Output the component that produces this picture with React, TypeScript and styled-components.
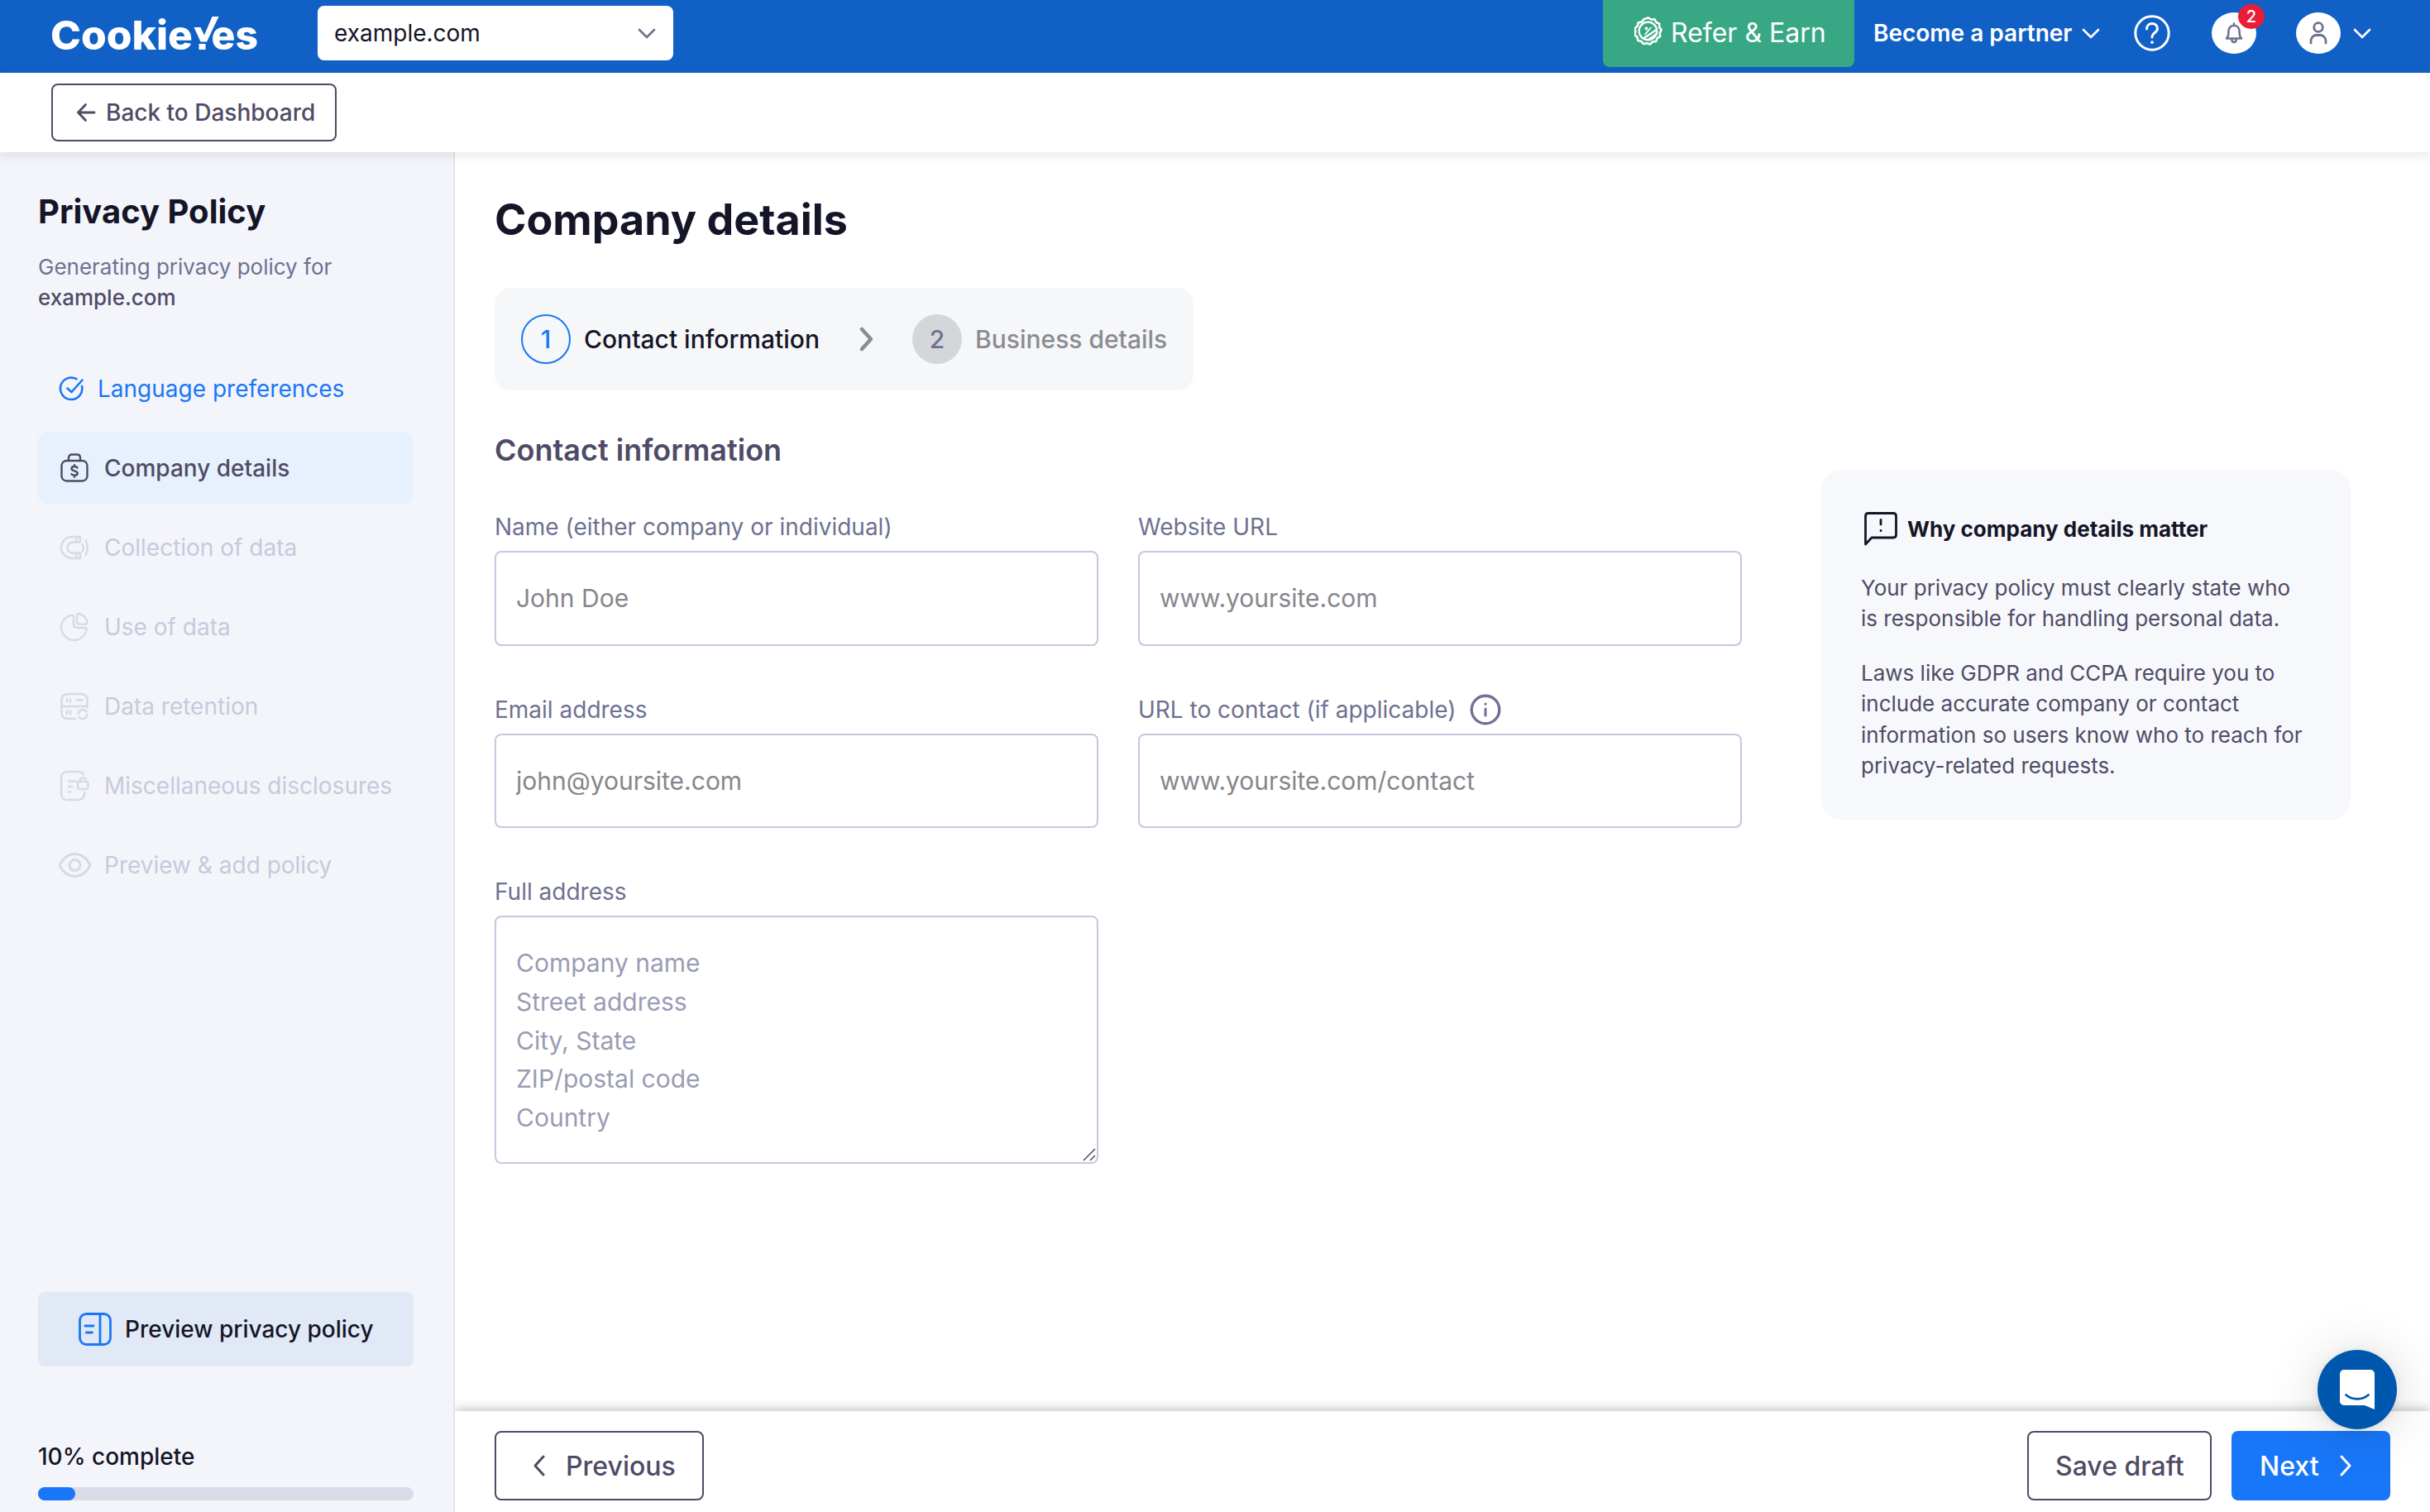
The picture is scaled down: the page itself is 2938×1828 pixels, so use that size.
import React from 'react';
import styled, { createGlobalStyle } from 'styled-components';

const font = `Inter, "Liberation Sans", sans-serif`;
const ink = '#151528';
const slate = '#4f4b66';
const muted = '#6e7191';
const faint = '#c8c9dc';
const blue = '#1877f8';

const Global = createGlobalStyle`
  * { box-sizing: border-box; }
  body { margin: 0; background: #fff; font-family: ${font}; color: ${ink}; }
  button, input, textarea { font-family: inherit; }
  svg { display: block; flex: none; }
  h1, h2, h3, p { margin: 0; }
`;

const Page = styled.div`
  width: 2938px;
  height: 1828px;
  display: flex;
  flex-direction: column;
  overflow: hidden;
  position: relative;
`;

/* ---------- header ---------- */
const Header = styled.header`
  height: 88px;
  flex: none;
  display: flex;
  align-items: flex-start;
  background: #1160c6;
  color: #fff;
  padding: 0 71px 0 60px;
`;

const HeaderGroup = styled.div<{ $ml?: string; $gap?: number }>`
  height: 80px;
  display: flex;
  align-items: center;
  gap: ${(p) => p.$gap ?? 0}px;
  margin-left: ${(p) => p.$ml ?? '0'};
`;

const SiteSelect = styled.div`
  width: 430px;
  height: 66px;
  margin-left: 70px;
  padding: 0 21px 0 20px;
  border-radius: 8px;
  background: #fff;
  color: ${ink};
  display: flex;
  align-items: center;
  justify-content: space-between;
  font-size: 28px;
`;

const ReferButton = styled.div`
  width: 304px;
  height: 82px;
  border-radius: 0 0 8px 8px;
  background: #38a884;
  display: flex;
  align-items: center;
  padding: 0 0 1px 38px;
  gap: 10px;
  font-size: 32px;
  white-space: nowrap;
  svg {
    margin-bottom: 4px;
  }
`;

const PartnerLink = styled.div`
  margin-left: 23px;
  width: 252px;
  font-size: 28px;
  font-weight: 600;
  white-space: nowrap;
`;

const RoundButton = styled.div<{ $ml: number }>`
  position: relative;
  width: 54px;
  height: 50px;
  margin-left: ${(p) => p.$ml}px;
  border-radius: 50%;
  background: #fff;
  display: flex;
  align-items: center;
  justify-content: center;
`;

const Badge = styled.span`
  position: absolute;
  left: 32px;
  top: -10px;
  width: 32px;
  height: 30px;
  border-radius: 50%;
  background: #ea1d36;
  color: #fff;
  font-size: 20px;
  font-weight: 500;
  line-height: 30px;
  text-align: center;
`;

const SubHeader = styled.div`
  height: 96px;
  flex: none;
  background: #fff;
  padding: 13px 0 0 62px;
  box-shadow: 0 4px 14px rgba(20, 20, 43, 0.1);
  position: relative;
  z-index: 2;
`;

const BackButton = styled.button`
  width: 345px;
  height: 70px;
  border: 2px solid ${slate};
  border-radius: 8px;
  background: #fff;
  color: ${slate};
  display: flex;
  align-items: center;
  padding: 0 0 0 28px;
  gap: 12px;
  font-size: 28px;
  font-weight: 500;
  white-space: nowrap;
`;

/* ---------- sidebar ---------- */
const Body = styled.div`
  flex: 1;
  display: flex;
  min-height: 0;
`;

const Sidebar = styled.aside`
  width: 550px;
  flex: none;
  background: #f4f5fb;
  border-right: 2px solid #e4e4e8;
  padding: 48px 48px 14px 46px;
  display: flex;
  flex-direction: column;
`;

const SideTitle = styled.h2`
  font-size: 40px;
  line-height: 48px;
  font-weight: 700;
`;

const SideText = styled.p`
  margin-top: 24px;
  font-size: 26px;
  line-height: 37.400px;
  color: ${muted};
  white-space: nowrap;
`;

const Domain = styled.span`
  display: block;
  color: ${slate};
  font-weight: 500;
`;

const Nav = styled.nav`
  margin-top: 47.200px;
  display: flex;
  flex-direction: column;
  gap: 8px;
`;

type NavState = 'done' | 'active' | 'todo';

const NavItem = styled.div<{ $state: NavState }>`
  height: 88px;
  border-radius: 12px;
  display: flex;
  align-items: center;
  gap: 15px;
  padding-left: 25px;
  font-size: 28px;
  font-weight: ${(p) => (p.$state === 'active' ? 500 : 400)};
  white-space: nowrap;
  background: ${(p) => (p.$state === 'active' ? '#e7f1fe' : 'transparent')};
  color: ${(p) => (p.$state === 'done' ? blue : p.$state === 'active' ? slate : faint)};
  svg {
    color: ${(p) => (p.$state === 'todo' ? '#d8d9e3' : 'inherit')};
  }
`;

const PreviewButton = styled.button`
  margin-top: auto;
  height: 90px;
  flex: none;
  border: 0;
  border-radius: 8px;
  background: #e1e9f6;
  color: ${ink};
  display: flex;
  align-items: center;
  padding: 0 0 0 47px;
  gap: 14px;
  font-size: 28px;
  font-weight: 500;
  white-space: nowrap;
  svg {
    color: ${blue};
  }
`;

const ProgressLabel = styled.div`
  margin-top: 89px;
  font-size: 28px;
  line-height: 40px;
  font-weight: 500;
`;

const Track = styled.div`
  margin-top: 17px;
  height: 16px;
  flex: none;
  border-radius: 8px;
  background: #d9dbe9;
`;

const Fill = styled.div`
  height: 16px;
  border-radius: 8px;
  background: ${blue};
`;

/* ---------- main ---------- */
const Main = styled.main`
  flex: 1;
  display: flex;
  flex-direction: column;
  min-width: 0;
`;

const Content = styled.div`
  flex: 1;
  padding: 50px 96px 0 48px;
`;

const Title = styled.h1`
  font-size: 52px;
  line-height: 64px;
  font-weight: 700;
`;

const Stepper = styled.div`
  margin-top: 50px;
  width: 845px;
  height: 124px;
  border-radius: 20px;
  background: #f6f7f9;
  display: flex;
  align-items: center;
  padding-left: 32px;
`;

const StepNumber = styled.div<{ $active?: boolean }>`
  width: 60px;
  height: 60px;
  border-radius: 50%;
  border: ${(p) => (p.$active ? `2px solid ${blue}` : '0')};
  background: ${(p) => (p.$active ? 'transparent' : '#d5d6da')};
  color: ${(p) => (p.$active ? blue : muted)};
  display: flex;
  align-items: center;
  justify-content: center;
  font-size: 30px;
  font-weight: 500;
`;

const StepLabel = styled.div<{ $active?: boolean }>`
  margin-left: 16px;
  font-size: 30px;
  font-weight: 500;
  white-space: nowrap;
  color: ${(p) => (p.$active ? ink : '#8a8b94')};
`;

const StepArrow = styled.div`
  flex: 1;
  display: flex;
  justify-content: center;
`;

const StepFirst = styled.div`
  width: 362px;
  display: flex;
  align-items: center;
`;

const StepSecond = styled.div`
  width: 340px;
  display: flex;
  align-items: center;
`;

const Columns = styled.div`
  margin-top: 50px;
  display: grid;
  grid-template-columns: 1508px 640px;
  column-gap: 96px;
  align-items: start;
`;

const SectionTitle = styled.h2`
  font-size: 36px;
  line-height: 44px;
  font-weight: 600;
  color: ${slate};
`;

const FormGrid = styled.div`
  margin-top: 52px;
  display: grid;
  grid-template-columns: 730px 730px;
  column-gap: 48px;
  row-gap: 58px;
`;

const Field = styled.label`
  display: flex;
  flex-direction: column;
  gap: 10px;
`;

const FieldLabel = styled.span`
  height: 38px;
  display: flex;
  align-items: center;
  gap: 17px;
  font-size: 28px;
  color: ${muted};
  white-space: nowrap;
`;

const TextInput = styled.input`
  height: 114.500px;
  border: 2px solid #c6c8dc;
  border-radius: 8px;
  padding: 0 24px;
  font-size: 30px;
  color: ${ink};
  background: #fff;
  outline: none;
  &::placeholder {
    color: #86868c;
    opacity: 1;
  }
`;

const AreaWrap = styled.span`
  position: relative;
  display: flex;
`;

const TextArea = styled.textarea`
  width: 730px;
  height: 300px;
  resize: none;
  overflow: hidden;
  border: 2px solid #c6c8dc;
  border-radius: 8px;
  padding: 32px 24px 28px;
  font-size: 30px;
  line-height: 46.8px;
  background: #fff;
  outline: none;
  &::placeholder {
    color: #9a9cb4;
    opacity: 1;
  }
`;

const Grip = styled.svg`
  position: absolute;
  right: 3px;
  bottom: 3px;
`;

const Tip = styled.section`
  margin-top: 46px;
  height: 423px;
  border-radius: 24px;
  background: #f7f8fb;
  padding: 47px 48px;
`;

const TipTitle = styled.h3`
  height: 48px;
  display: flex;
  align-items: center;
  gap: 8px;
  font-size: 26px;
  font-weight: 700;
  white-space: nowrap;
`;

const TipText = styled.p`
  margin-top: 28px;
  font-size: 26px;
  line-height: 37.4px;
  color: ${slate};
  h3 + & {
    margin-top: 29px;
  }
`;

/* ---------- footer ---------- */
const Footer = styled.footer`
  height: 122px;
  flex: none;
  background: #fff;
  box-shadow: 0 -3px 12px rgba(20, 20, 30, 0.24);
  clip-path: inset(-30px 0 0 0);
  display: flex;
  align-items: flex-start;
  padding: 24px 48px 0;
  gap: 24px;
`;

const FooterButton = styled.button<{ $w: number; $primary?: boolean; $left?: number }>`
  width: ${(p) => p.$w}px;
  height: 84px;
  border-radius: 8px;
  border: ${(p) => (p.$primary ? '0' : `2px solid ${slate}`)};
  background: ${(p) => (p.$primary ? blue : '#fff')};
  color: ${(p) => (p.$primary ? '#fff' : slate)};
  padding: 0 0 0 ${(p) => p.$left ?? 0}px;
  display: flex;
  align-items: center;
  font-size: 32px;
  font-weight: 500;
  white-space: nowrap;
  &:nth-child(2) {
    margin-left: auto;
  }
`;

const ChatBubble = styled.div`
  position: absolute;
  left: 2802px;
  top: 1632px;
  width: 96px;
  height: 96px;
  z-index: 3;
  border-radius: 50%;
  background: #0057ae;
  display: flex;
  align-items: center;
  justify-content: center;
  box-shadow: 0 2px 12px rgba(0, 0, 0, 0.08), 0 4px 64px rgba(0, 0, 0, 0.16);
`;

/* ---------- drawings ---------- */
const Stroke = ({ w, h, vb, sw, children }: { w: number; h: number; vb?: string; sw: number; children: React.ReactNode }) => (
  <svg width={w} height={h} viewBox={vb ?? `0 0 ${w} ${h}`} fill="none" stroke="currentColor" strokeWidth={sw} strokeLinecap="round" strokeLinejoin="round">
    {children}
  </svg>
);

const ChevronDown = ({ color = 'currentColor', sw = 2.6 }: { color?: string; sw?: number }) => (
  <svg width="22" height="14" viewBox="0 0 22 14" fill="none" stroke={color} strokeWidth={sw} strokeLinecap="round" strokeLinejoin="round">
    <path d="M2 3l9 9 9-9" />
  </svg>
);

const Logo = () => (
  <svg width="254" height="60" viewBox="0 0 254 60" fill="#fff">
    <g fontFamily={font} fontWeight={800} fontSize={48.500}>
      <text x="1" y="49.500" textLength="172" lengthAdjust="spacingAndGlyphs">Cookie</text>
      <text x="195.500" y="49.500" textLength="56.500" lengthAdjust="spacingAndGlyphs">es</text>
    </g>
    <path d="M174.500 23h8l4.500 9.500L196.500 10h8L190 40.500h-7.500z" />
    <rect x="180.500" y="43" width="8" height="7" />
  </svg>
);

const SealIcon = () => (
  <Stroke w={34} h={36} sw={2.6}>
    <path d="M17 1.500l3.500 2.200 4.100-.4 1.900 3.700 3.800 1.700-.1 4.200 2.500 3.300-2 3.600.6 4.100-3.600 2.200-1.500 3.900-4.200.5-2.900 3-4-1.300-4 .9-2.700-3.200-4-1-.9-4.100-3.200-2.600 1.200-4-.9-4.100 3.200-2.700 1-4 4.100-.8 2.500-3.300z" />
    <circle cx="16.500" cy="17.500" r="10.800" strokeWidth="2.200" />
    <path d="M12.500 25.500L26 16.500M17 28l10-7" strokeWidth="2.600" />
    <path d="M13 21.500l7-8" strokeWidth="1.800" />
    <circle cx="14.500" cy="14.500" r="1.200" strokeWidth="1.600" />
  </Stroke>
);

const HelpIcon = () => (
  <Stroke w={44} h={44} sw={3}>
    <circle cx="22" cy="22" r="20.200" />
    <path d="M15.500 17c0-4 2.900-6.500 6.500-6.500s6.500 2.600 6.500 6c0 5-6.500 4.800-6.500 10.500" />
    <path d="M22 33v.2" strokeWidth="3.600" />
  </Stroke>
);

const BellIcon = () => (
  <Stroke w={22} h={26} sw={2.6}>
    <path d="M11 1.500v2M2 19.500c2-2 2.400-4 2.400-8C4.400 6.800 7 3.800 11 3.800s6.600 3 6.600 7.700c0 4 .4 6 2.400 8zM8.500 20v1.500a2.500 2.500 0 0 0 5 0V20" />
  </Stroke>
);

const UserIcon = () => (
  <Stroke w={22} h={28} sw={2.800}>
    <circle cx="11" cy="7" r="5.300" />
    <path d="M2 26v-2c0-4.500 3-7.500 6-7.500h6c3 0 6 3 6 7.500v2" />
  </Stroke>
);

const InfoIcon = () => (
  <Stroke w={38} h={38} sw={3.400}>
    <circle cx="19" cy="19" r="16.800" />
    <path d="M19 18v8M19 12v.2" strokeWidth="3" />
  </Stroke>
);

const CheckCircle = () => (
  <Stroke w={32} h={32} sw={2.600}>
    <path d="M21.500 4.200A13.200 13.200 0 1 0 28 12.800" />
    <path d="M10.500 15.500l5 4.500L28.500 5.500" />
  </Stroke>
);

const BriefcaseIcon = () => (
  <Stroke w={40} h={36} sw={2.400}>
    <rect x="3.500" y="9" width="31" height="24.500" rx="6" />
    <path d="M12 9V5.500c0-2.500 1.400-4 4-4h6c2.600 0 4 1.500 4 4V9" />
    <path d="M22.500 17.500c-.6-1-1.800-1.600-3.500-1.600-2 0-3.500 1-3.500 2.700 0 3.800 7.200 1.700 7.200 5.500 0 1.700-1.600 2.700-3.700 2.700-1.800 0-3-.7-3.600-1.800M19 14.300v1.600M19 26.800v1.600" strokeWidth="2.500" />
  </Stroke>
);

const MagnetIcon = () => (
  <Stroke w={40} h={36} sw={2.400}>
    <path d="M26 5H16a13 13 0 0 0 0 26h10v-6.500H17a6.500 6.500 0 0 1 0-13h9zM21.500 5v6.500M21.500 24.500V31" />
    <path d="M28.500 14c1.500 2.500 1.500 6 0 8.500M32.500 9c3 5 3 13 0 18" />
  </Stroke>
);

const PieIcon = () => (
  <Stroke w={40} h={36} sw={2.400}>
    <path d="M18 6c0-2-1-2.700-3-2.200C8.500 5.200 3 11 3 18.500 3 27 10 34 18.500 34 26 34 31.500 29 33.500 22c.5-2-.3-3-2.200-3H22c-2.700 0-4-1.300-4-4z" />
    <path d="M22 4.500c0-2 1-3 3-2.400 4.500 1.200 8 4.700 9.300 9.300.6 2-.3 3.200-2.500 3.200H24c-1.400 0-2-.7-2-2z" />
  </Stroke>
);

const ServerIcon = () => (
  <Stroke w={40} h={36} sw={2.500}>
    <path d="M20 33h-9c-5 0-7.500-2.500-7.500-7.500v-15C3.500 5.500 6 3 11 3h16c5 0 7.500 2.500 7.500 7.500v9M3.500 18h31" />
    <path d="M10 9v3.500M14 9v3.500M21.500 10.500h7M10 23.500V27M14 23.500V27" />
    <path d="M24 26.500a5.200 5.200 0 0 1 9.500-2M34 28a5.200 5.200 0 0 1-9.500 3M33.500 30.500a5.200 5.200 0 0 1-7 2" />
  </Stroke>
);

const DocLockIcon = () => (
  <Stroke w={40} h={38} sw={2.500}>
    <path d="M30 5.500C29 3 26.500 2 23.500 2H10.500C6 2 3 4.500 3 9v20c0 4.500 3 7 7.500 7h13c5 0 7.500-3 8-9" />
    <path d="M12 13.500h9M12 20h4M12 26.500h2" />
    <rect x="23" y="14" width="12.500" height="9" rx="2.500" />
    <path d="M25.500 14c0-3 1.500-4.500 4-4.500 1.700 0 3 .7 3.500 2" />
  </Stroke>
);

const EyeIcon = () => (
  <svg width="40" height="32" viewBox="0.500 0 40 32" fill="none" stroke="currentColor" strokeWidth="3" strokeLinejoin="round">
    <path d="M1.500 16C5 8 12 2.500 20 2.500S35 8 38.500 16c-3.500 8-10.500 13.500-18.500 13.500S5 24 1.500 16z" />
    <circle cx="20" cy="16" r="6.500" />
  </svg>
);

const PreviewIcon = () => (
  <Stroke w={44} h={44} sw={2.800}>
    <rect x="3.500" y="3.500" width="37" height="37" rx="8" />
    <path d="M28 3.500v37M10 18h10M11.500 26h7" />
  </Stroke>
);

const TipIcon = () => (
  <Stroke w={48} h={48} sw={2.800}>
    <path d="M5.500 43V9c0-2.200 1.200-3.500 3.500-3.500h30c2.200 0 3.500 1.300 3.500 3.500v22.500c0 2.200-1.300 3.500-3.500 3.500H13z" />
    <path d="M24 13.500v5.500M24 26.500v.2" />
  </Stroke>
);

const ArrowLeft = () => (
  <Stroke w={24} h={24} sw={2.800}>
    <path d="M22 12H3M11.500 2.500L2.500 12l9 9.500" />
  </Stroke>
);

const Chevron = ({ d, sw, w, h }: { d: string; sw: number; w: number; h: number }) => (
  <Stroke w={w} h={h} sw={sw}>
    <path d={d} />
  </Stroke>
);

const Spacer = styled.span<{ $w: number }>`
  width: ${(p) => p.$w}px;
  flex: none;
`;

const IconTone = styled.span<{ $c: string }>`
  color: ${(p) => p.$c};
  display: flex;
`;

const navItems: { label: string; state: NavState; icon: React.ReactNode }[] = [
  { label: 'Language preferences', state: 'done', icon: <CheckCircle /> },
  { label: 'Company details', state: 'active', icon: <BriefcaseIcon /> },
  { label: 'Collection of data', state: 'todo', icon: <MagnetIcon /> },
  { label: 'Use of data', state: 'todo', icon: <PieIcon /> },
  { label: 'Data retention', state: 'todo', icon: <ServerIcon /> },
  { label: 'Miscellaneous disclosures', state: 'todo', icon: <DocLockIcon /> },
  { label: 'Preview & add policy', state: 'todo', icon: <EyeIcon /> },
];

const fields = [
  { label: 'Name (either company or individual)', placeholder: 'John Doe' },
  { label: 'Website URL', placeholder: 'www.yoursite.com' },
  { label: 'Email address', placeholder: 'john@yoursite.com' },
  { label: 'URL to contact (if applicable)', placeholder: 'www.yoursite.com/contact', info: true },
];

export default function App() {
  const progress = 10;
  return (
    <>
      <Global />
      <Page>
        <Header>
          <HeaderGroup>
            <Logo />
            <SiteSelect>
              example.com
              <ChevronDown color="#6e7191" />
            </SiteSelect>
          </HeaderGroup>
          <HeaderGroup $ml="auto">
            <ReferButton>
              <SealIcon />
              Refer &amp; Earn
            </ReferButton>
            <PartnerLink>Become a partner</PartnerLink>
            <ChevronDown />
            <Spacer $w={41} />
            <HelpIcon />
            <RoundButton $ml={50}>
              <IconTone $c={muted}><BellIcon /></IconTone>
              <Badge>2</Badge>
            </RoundButton>
            <RoundButton $ml={48}>
              <IconTone $c={muted}><UserIcon /></IconTone>
            </RoundButton>
            <Spacer $w={15} />
            <ChevronDown />
          </HeaderGroup>
        </Header>
        <SubHeader>
          <BackButton>
            <ArrowLeft />
            Back to Dashboard
          </BackButton>
        </SubHeader>
        <Body>
          <Sidebar>
            <SideTitle>Privacy Policy</SideTitle>
            <SideText>
              Generating privacy policy for
              <Domain>example.com</Domain>
            </SideText>
            <Nav>
              {navItems.map((n) => (
                <NavItem key={n.label} $state={n.state}>
                  {n.icon}
                  {n.label}
                </NavItem>
              ))}
            </Nav>
            <PreviewButton>
              <PreviewIcon />
              Preview privacy policy
            </PreviewButton>
            <ProgressLabel>{progress}% complete</ProgressLabel>
            <Track>
              <Fill style={{ width: `${progress}%` }} />
            </Track>
          </Sidebar>
          <Main>
            <Content>
              <Title>Company details</Title>
              <Stepper>
                <StepFirst>
                  <StepNumber $active>1</StepNumber>
                  <StepLabel $active>Contact information</StepLabel>
                </StepFirst>
                <StepArrow>
                  <IconTone $c="#8a8b94"><Chevron w={20} h={32} sw={4.500} d="M4 4l11 12L4 28" /></IconTone>
                </StepArrow>
                <StepSecond>
                  <StepNumber>2</StepNumber>
                  <StepLabel>Business details</StepLabel>
                </StepSecond>
              </Stepper>
              <Columns>
                <div>
                  <SectionTitle>Contact information</SectionTitle>
                  <FormGrid>
                    {fields.map((f) => (
                      <Field key={f.label}>
                        <FieldLabel>
                          {f.label}
                          {f.info && <InfoIcon />}
                        </FieldLabel>
                        <TextInput placeholder={f.placeholder} />
                      </Field>
                    ))}
                    <Field>
                      <FieldLabel>Full address</FieldLabel>
                      <AreaWrap>
                        <TextArea placeholder={'Company name\nStreet address\nCity, State\nZIP/postal code\nCountry'} />
                        <Grip width="16" height="16" viewBox="0 0 16 16" stroke="#55555c" strokeWidth="1.600">
                          <path d="M1 15L15 1M9 15l6-6" />
                        </Grip>
                      </AreaWrap>
                    </Field>
                  </FormGrid>
                </div>
                <Tip>
                  <TipTitle>
                    <TipIcon />
                    Why company details matter
                  </TipTitle>
                  <TipText>Your privacy policy must clearly state who is responsible for handling personal data.</TipText>
                  <TipText>
                    Laws like GDPR and CCPA require you to include accurate company or contact information so users know who to reach for
                    privacy-related requests.
                  </TipText>
                </Tip>
              </Columns>
            </Content>
            <Footer>
              <FooterButton $w={253} $left={44}>
                <Chevron w={16} h={26} sw={3} d="M13 2L3 13l10 11" />
                <Spacer $w={24} />
                Previous
              </FooterButton>
              <FooterButton $w={223} $left={32}>Save draft</FooterButton>
              <FooterButton $w={192} $left={34} $primary>
                Next
                <Spacer $w={24} />
                <Chevron w={16} h={26} sw={3} d="M3 2l10 11L3 24" />
              </FooterButton>
            </Footer>
          </Main>
        </Body>
        <ChatBubble>
          <svg width="42" height="50" viewBox="0 0 42 50">
            <path fill="#fff" d="M5 1h32a5 5 0 0 1 5 5v43l-12-5H5a5 5 0 0 1-5-5V6a5 5 0 0 1 5-5z" />
            <path d="M7.500 31.500c8 6.500 19 6.500 27 0" fill="none" stroke="#0057ae" strokeWidth="2.800" strokeLinecap="round" />
          </svg>
        </ChatBubble>
      </Page>
    </>
  );
}
